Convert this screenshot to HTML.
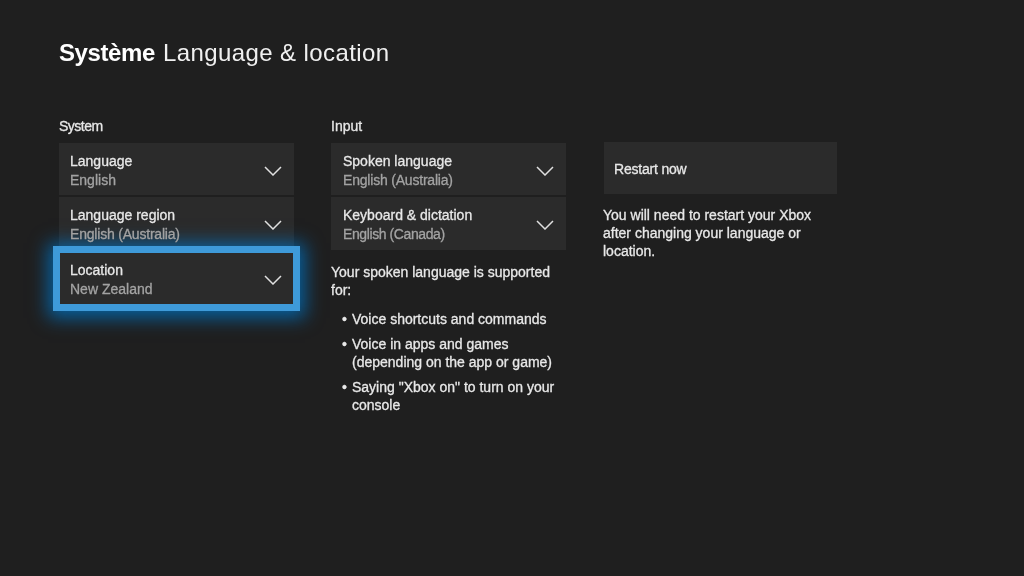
<!DOCTYPE html>
<html><head><meta charset="utf-8">
<style>
html,body{margin:0;padding:0;}
body{width:1024px;height:576px;overflow:hidden;background:#1f1f1f;position:relative;font-family:"Liberation Sans",sans-serif;}
.t{position:absolute;white-space:nowrap;line-height:1;will-change:transform;}
.card{position:absolute;background:#2b2b2b;}
.chev{position:absolute;width:18px;height:10px;}
.w{color:#e8e8e8;-webkit-text-stroke:0.3px #e8e8e8;}
.g{color:#a3a3a3;-webkit-text-stroke:0.3px #a3a3a3;}
</style></head>
<body>
<div class="t" id="h1b" style="left:59px;top:41px;font-size:24px;font-weight:bold;color:#fff;letter-spacing:-0.4px;">Système</div>
<div class="t" id="h1" style="left:163px;top:41px;font-size:24px;letter-spacing:0.4px;color:#f0f0f0;">Language &amp; location</div>

<div class="t w" id="lblSys" style="left:59px;top:119px;font-size:14px;letter-spacing:-0.5px;">System</div>
<div class="t w" id="lblIn" style="left:331px;top:119px;font-size:14px;">Input</div>

<div class="card" style="left:59px;top:143px;width:235px;height:52px;"></div>
<div class="card" style="left:59px;top:197px;width:235px;height:52px;"></div>
<div class="card" style="left:59px;top:251px;width:235px;height:53px;"></div>

<div class="card" style="left:331px;top:143px;width:235px;height:52px;"></div>
<div class="card" style="left:331px;top:197px;width:235px;height:53px;"></div>

<div class="card" style="left:604px;top:142px;width:233px;height:52px;"></div>

<!-- focus ring -->
<div style="position:absolute;left:53px;top:246px;width:233px;height:51px;border:7px solid #3e9ad9;box-shadow:0 2px 17px 5px rgba(0,112,190,0.8);"></div>

<div class="t w" style="left:70px;top:154px;font-size:14px;">Language</div>
<div class="t g" style="left:70px;top:173px;font-size:14px;">English</div>
<div class="t w" style="left:70px;top:208px;font-size:14px;">Language region</div>
<div class="t g" style="left:70px;top:227px;font-size:14px;letter-spacing:-0.2px;">English (Australia)</div>
<div class="t w" style="left:70px;top:263px;font-size:14px;">Location</div>
<div class="t g" style="left:70px;top:282px;font-size:14px;">New Zealand</div>

<div class="t w" style="left:343px;top:154px;font-size:14px;">Spoken language</div>
<div class="t g" style="left:343px;top:173px;font-size:14px;letter-spacing:-0.2px;">English (Australia)</div>
<div class="t w" style="left:343px;top:208px;font-size:14px;">Keyboard &amp; dictation</div>
<div class="t g" style="left:343px;top:227px;font-size:14px;letter-spacing:-0.4px;">English (Canada)</div>

<div class="t w" style="left:614px;top:162px;font-size:14px;letter-spacing:-0.2px;">Restart now</div>

<div class="t w" style="left:331px;top:265px;font-size:14px;">Your spoken language is supported</div>
<div class="t w" style="left:331px;top:283px;font-size:14px;">for:</div>

<div class="t w" style="left:342px;top:312px;font-size:14px;">•</div>
<div class="t w" style="left:352px;top:312px;font-size:14px;">Voice shortcuts and commands</div>
<div class="t w" style="left:342px;top:337px;font-size:14px;">•</div>
<div class="t w" style="left:352px;top:337px;font-size:14px;">Voice in apps and games</div>
<div class="t w" style="left:352px;top:355px;font-size:14px;">(depending on the app or game)</div>
<div class="t w" style="left:342px;top:380px;font-size:14px;">•</div>
<div class="t w" style="left:352px;top:380px;font-size:14px;">Saying "Xbox on" to turn on your</div>
<div class="t w" style="left:352px;top:398px;font-size:14px;">console</div>

<div class="t w" style="left:603px;top:208px;font-size:14px;">You will need to restart your Xbox</div>
<div class="t w" style="left:603px;top:226px;font-size:14px;">after changing your language or</div>
<div class="t w" style="left:603px;top:244px;font-size:14px;">location.</div>

<svg class="chev" style="left:264px;top:166px" viewBox="0 0 18 10"><polyline points="1,1 9,9 17,1" fill="none" stroke="#e0e0e0" stroke-width="1.5"/></svg>
<svg class="chev" style="left:264px;top:220px" viewBox="0 0 18 10"><polyline points="1,1 9,9 17,1" fill="none" stroke="#e0e0e0" stroke-width="1.5"/></svg>
<svg class="chev" style="left:264px;top:275px" viewBox="0 0 18 10"><polyline points="1,1 9,9 17,1" fill="none" stroke="#e0e0e0" stroke-width="1.5"/></svg>
<svg class="chev" style="left:536px;top:166px" viewBox="0 0 18 10"><polyline points="1,1 9,9 17,1" fill="none" stroke="#e0e0e0" stroke-width="1.5"/></svg>
<svg class="chev" style="left:536px;top:220px" viewBox="0 0 18 10"><polyline points="1,1 9,9 17,1" fill="none" stroke="#e0e0e0" stroke-width="1.5"/></svg>
</body></html>
